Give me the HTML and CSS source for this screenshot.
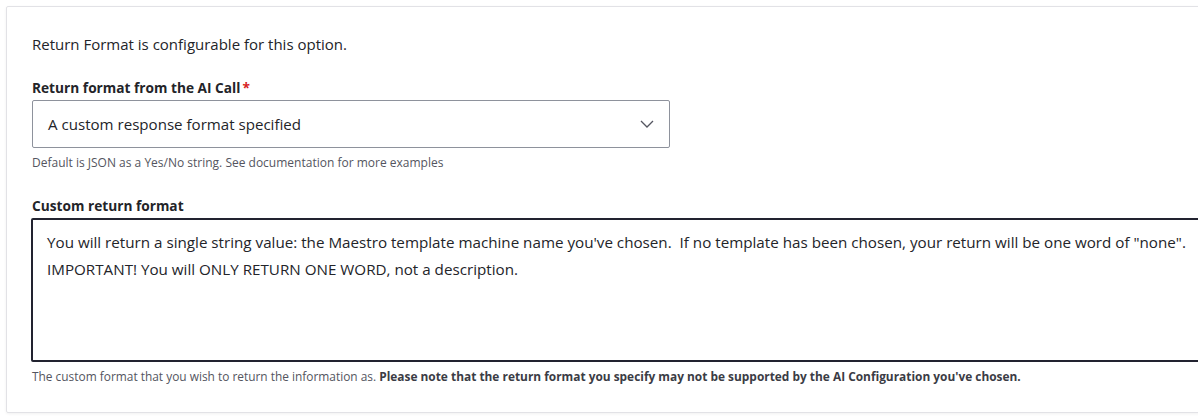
FILE: index.html
```html
<!DOCTYPE html>
<html lang="en">
<head>
<meta charset="utf-8">
<title>Return format</title>
<link rel="stylesheet" href="styles.css">
</head>
<body>
<div class="card">
  <p class="intro">Return Format is configurable for this option.</p>
  <div class="form-item">
    <label class="label">Return format from the AI Call<span class="req">*</span></label>
    <div class="select">
      <span class="select-text">A custom response format specified</span>
      <svg class="chev" width="14" height="8" viewBox="0 0 14 8"><path d="M1 1 L7 7 L13 1" fill="none" stroke="#545560" stroke-width="1.3"/></svg>
    </div>
    <div class="desc">Default is JSON as a Yes/No string. See documentation for more examples</div>
  </div>
  <div class="form-item">
    <label class="label">Custom return format</label>
    <textarea class="textarea">You will return a single string value: the Maestro template machine name you've chosen.  If no template has been chosen, your return will be one word of "none".
IMPORTANT! You will ONLY RETURN ONE WORD, not a description.</textarea>
    <div class="desc desc-last">The custom format that you wish to return the information as. <strong>Please note that the return format you specify may not be supported by the AI Configuration you've chosen.</strong></div>
  </div>
</div>
</body>
</html>
```
FILE: styles.css
```css
html, body {
  margin: 0;
  padding: 0;
  background: #ffffff;
  overflow: hidden;
  width: 1198px;
  height: 418px;
}
body {
  font-family: "Open Sans", "Noto Sans", sans-serif;
  color: #232429;
}
.card {
  margin: 6px 0 0 6px;
  width: 1260px;
  height: 407px;
  box-sizing: border-box;
  border: 1px solid #e2e2e6;
  border-radius: 2px;
  box-shadow: 0 1px 3px rgba(0,0,0,0.06);
  padding: 27px 0 0 25px;
}
.intro {
  margin: 0 0 25px 0;
  font-size: 15px;
  line-height: 20px;
}
.form-item {
  margin-bottom: 26px;
}
.label {
  display: block;
  font-weight: 700;
  font-size: 13.7px;
  line-height: 18px;
  margin-bottom: 3px;
}
.req {
  color: #d72222;
  margin-left: 2px;
  font-weight: 700;
}
.select {
  width: 638px;
  height: 48px;
  box-sizing: border-box;
  border: 1px solid #8e929c;
  border-radius: 2px;
  display: flex;
  align-items: center;
  justify-content: space-between;
  padding: 0 15px 0 15px;
}
.select-text {
  font-size: 15.1px;
}
.chev {
  display: block;
}
.desc {
  font-size: 12px;
  line-height: 17px;
  color: #545560;
  margin-top: 6px;
}
.desc-last {
  font-size: 11.9px;
}
.desc strong {
  color: #3b3c45;
}
.textarea {
  display: block;
  width: 1240px;
  height: 144px;
  box-sizing: border-box;
  border: 2px solid #222330;
  border-radius: 2px;
  margin: 1px 0 3px -1px;
  padding: 9px 14px 9px 14px;
  font-family: inherit;
  font-size: 15.2px;
  line-height: 27px;
  color: #232429;
  resize: none;
  overflow: hidden;
  white-space: pre;
}
```
